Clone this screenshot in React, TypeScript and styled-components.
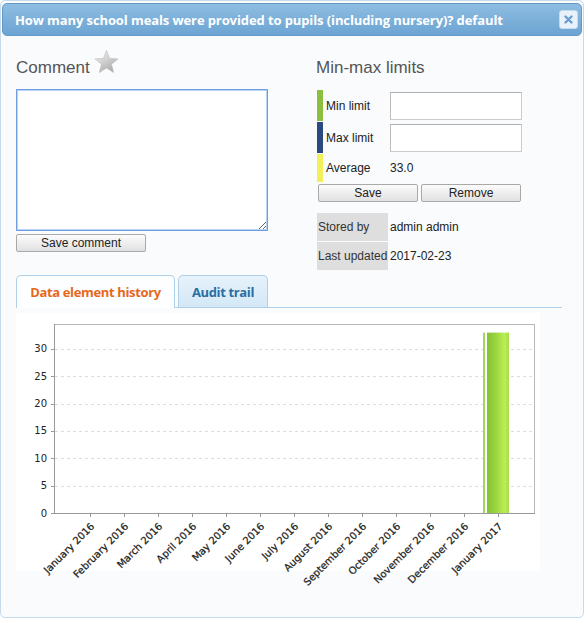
import React from "react";
import styled, { createGlobalStyle } from "styled-components";

const Global = createGlobalStyle`
  html, body { margin: 0; padding: 0; background: #ffffff; }
  body { font-family: "Liberation Sans", Arial, sans-serif; }
  * { box-sizing: border-box; }
`;

const Dialog = styled.div`
  width: 584px;
  height: 618px;
  border: 1px solid #c5dbec;
  border-radius: 5px;
  padding: 2px 1px;
  background: #f9fbfd;
  display: flex;
  flex-direction: column;
`;

const TitleBar = styled.div`
  height: 33px;
  flex: none;
  border: 1px solid #6399c9;
  border-radius: 5px;
  background: linear-gradient(#8ebde1, #6ca4d2);
  display: flex;
  align-items: center;
  justify-content: space-between;
  padding: 0 3px 0 12px;
`;

const Title = styled.span`
  color: #ffffff;
  font-family: "Open Sans", "Liberation Sans", sans-serif;
  font-weight: 700;
  font-size: 13px;
  letter-spacing: -0.1px;
`;

const CloseButton = styled.button`
  width: 19px;
  height: 19px;
  padding: 0;
  border: 1px solid #c5dbec;
  border-radius: 3px;
  background: #e9f2fa;
  display: flex;
  align-items: center;
  justify-content: center;
`;

const Content = styled.div`
  padding: 0 14px;
  display: flex;
  flex-direction: column;
`;

const TopGrid = styled.div`
  display: grid;
  grid-template-columns: 300px 1fr;
  margin-top: 13px;
`;

const Column = styled.div`
  display: flex;
  flex-direction: column;
  align-items: flex-start;
`;

const Heading = styled.h2`
  margin: 0;
  height: 28px;
  display: flex;
  align-items: flex-end;
  gap: 4px;
  font-weight: normal;
  font-size: 17px;
  color: #555555;
  span { line-height: 19px; }
  svg { margin-bottom: 3px; }
`;

const CommentArea = styled.textarea`
  margin-top: 12px;
  width: 252px;
  height: 142px;
  border: 1px solid #6f9fe3;
  box-shadow: 0 0 0 1px #b9d2f4 inset;
  background: #ffffff;
  outline: none;
  resize: both;
  font-family: "Liberation Sans", Arial, sans-serif;
  font-size: 12px;
`;

const Button = styled.button<{ $w: number }>`
  width: ${(p) => p.$w}px;
  height: 18px;
  padding: 0;
  border: 1px solid #a9a9a9;
  border-radius: 2px;
  background: linear-gradient(#fcfcfc, #e1e1e1);
  font-family: "Liberation Sans", Arial, sans-serif;
  font-size: 12px;
  color: #222222;
`;

const SaveCommentButton = styled(Button)`
  margin-top: 3px;
`;

const LimitTable = styled.div`
  margin-top: 13px;
  margin-left: 1px;
  display: flex;
  flex-direction: column;
  gap: 1px;
`;

const LimitRow = styled.div<{ $h: number }>`
  display: grid;
  grid-template-columns: 6px 67px 132px;
  align-items: center;
  height: ${(p) => p.$h}px;
  font-size: 12px;
  color: #222222;
`;

const ColorBar = styled.div<{ $c: string }>`
  align-self: stretch;
  background: ${(p) => p.$c};
`;

const LimitLabel = styled.span`
  padding-left: 3px;
`;

const LimitInput = styled.input`
  width: 132px;
  height: 28px;
  border: 1px solid #cccccc;
  border-top-color: #b0b0b0;
  border-left-color: #bcbcbc;
  background: #ffffff;
`;

const ButtonRow = styled.div`
  display: flex;
  gap: 3px;
  margin-top: 2px;
  margin-left: 2px;
`;

const InfoTable = styled.div`
  margin-top: 11px;
  margin-left: 1px;
  display: grid;
  grid-template-columns: 71px auto;
  grid-auto-rows: 28px;
  row-gap: 1px;
  column-gap: 2px;
  font-size: 12px;
  color: #222222;
`;

const InfoLabel = styled.div`
  background: #dedede;
  display: flex;
  align-items: center;
  padding-left: 1px;
  color: #333333;
`;

const InfoValue = styled.div`
  display: flex;
  align-items: center;
`;

const TabList = styled.div`
  margin-top: 5px;
  margin-right: 6px;
  display: flex;
  gap: 3px;
  align-items: flex-start;
  border-bottom: 1px solid #aed0ea;
`;

const Tab = styled.div<{ $active?: boolean; $w: number }>`
  width: ${(p) => p.$w}px;
  height: ${(p) => (p.$active ? 33 : 32)}px;
  margin-bottom: ${(p) => (p.$active ? -1 : 0)}px;
  border: 1px solid #aed0ea;
  border-bottom: none;
  border-radius: 5px 5px 0 0;
  background: ${(p) => (p.$active ? "#fdfeff" : "linear-gradient(#e6f2fb, #d4e8f7)")};
  color: ${(p) => (p.$active ? "#e5691c" : "#2b6ea3")};
  font-family: "Open Sans", "Liberation Sans", sans-serif;
  font-weight: 700;
  font-size: 13px;
  letter-spacing: -0.35px;
  display: flex;
  align-items: center;
  justify-content: center;
`;

const Panel = styled.div`
  padding-top: 5px;
`;

const ChartBox = styled.div`
  width: 524px;
  height: 258px;
  background: #ffffff;
  svg { overflow: visible; display: block; }
`;

const Star = () => (
  <svg width="25" height="24" viewBox="0 0 25 24">
    <defs>
      <linearGradient id="starG" x1="0" y1="0" x2="0.6" y2="1">
        <stop offset="0" stopColor="#f6f6f6" />
        <stop offset="0.5" stopColor="#d2d2d2" />
        <stop offset="1" stopColor="#acacac" />
      </linearGradient>
    </defs>
    <polygon
      points="12.5,0.5 15.6,8.4 24,8.9 17.5,14.2 19.7,22.6 12.5,18 5.3,22.6 7.5,14.2 1,8.9 9.4,8.4"
      fill="url(#starG)"
      stroke="#bbbbbb"
      strokeWidth="0.6"
      strokeLinejoin="round"
    />
  </svg>
);

const CloseIcon = () => (
  <svg width="9" height="9" viewBox="0 0 9 9">
    <path d="M1.5 1.5 L7.5 7.5 M7.5 1.5 L1.5 7.5" stroke="#6a9dcf" strokeWidth="2.4" strokeLinecap="round" />
  </svg>
);

const months = [
  "January 2016",
  "February 2016",
  "March 2016",
  "April 2016",
  "May 2016",
  "June 2016",
  "July 2016",
  "August 2016",
  "September 2016",
  "October 2016",
  "November 2016",
  "December 2016",
  "January 2017",
];

const yOf = (v: number) => 200 - v * 5.467;

const Chart = () => (
  <svg width="524" height="258" viewBox="0 0 524 258">
    <defs>
      <linearGradient id="barG" x1="0" y1="0" x2="1" y2="0">
        <stop offset="0" stopColor="#84c236" />
        <stop offset="0.35" stopColor="#96d23c" />
        <stop offset="0.8" stopColor="#baee55" />
        <stop offset="1" stopColor="#a6de49" />
      </linearGradient>
    </defs>
    {[5, 10, 15, 20, 25, 30].map((v) => (
      <line
        key={v}
        x1="39"
        x2="518"
        y1={Math.round(yOf(v)) + 0.5}
        y2={Math.round(yOf(v)) + 0.5}
        stroke="#dddddd"
        strokeDasharray="3,3"
      />
    ))}
    <rect x="38.5" y="11.5" width="480" height="189" fill="none" stroke="#b8b8b8" />
    <line x1="38.5" x2="38.5" y1="11" y2="201" stroke="#999999" />
    <line x1="38" x2="519" y1="200.5" y2="200.5" stroke="#999999" />
    {[0, 5, 10, 15, 20, 25, 30].map((v) => (
      <g key={v}>
        <line x1="35" x2="38" y1={Math.round(yOf(v)) + 0.5} y2={Math.round(yOf(v)) + 0.5} stroke="#999999" />
        <text
          x="31"
          y={yOf(v) + 3.5}
          textAnchor="end"
          fontFamily="'DejaVu Sans', sans-serif"
          fontSize="10"
          fill="#222222"
        >
          {v}
        </text>
      </g>
    ))}
    <rect x="467" y="19.6" width="2" height="180.4" fill="#a3d856" />
    <rect x="471" y="19.6" width="22" height="180.4" fill="url(#barG)" />
    {months.map((m, i) => {
      const x = 74 + 34 * i;
      return (
        <g key={m}>
          <line x1={x + 0.5} x2={x + 0.5} y1="200" y2="204" stroke="#999999" />
          <text
            transform={`translate(${x + 5},214) rotate(-45)`}
            textAnchor="end"
            fontFamily="'DejaVu Sans', sans-serif"
            fontSize="10"
            fill="#222222"
            stroke="#222222"
            strokeWidth="0.25"
          >
            {m}
          </text>
        </g>
      );
    })}
  </svg>
);

export default function App() {
  return (
    <>
      <Global />
      <Dialog>
        <TitleBar>
          <Title>How many school meals were provided to pupils (including nursery)? default</Title>
          <CloseButton aria-label="close">
            <CloseIcon />
          </CloseButton>
        </TitleBar>
        <Content>
          <TopGrid>
            <Column>
              <Heading>
                <span>Comment</span>
                <Star />
              </Heading>
              <CommentArea />
              <SaveCommentButton $w={130}>Save comment</SaveCommentButton>
            </Column>
            <Column>
              <Heading>
                <span>Min-max limits</span>
              </Heading>
              <LimitTable>
                <LimitRow $h={31}>
                  <ColorBar $c="#8cbf3f" />
                  <LimitLabel>Min limit</LimitLabel>
                  <LimitInput />
                </LimitRow>
                <LimitRow $h={31}>
                  <ColorBar $c="#2a4a7f" />
                  <LimitLabel>Max limit</LimitLabel>
                  <LimitInput />
                </LimitRow>
                <LimitRow $h={28}>
                  <ColorBar $c="#f2f05a" />
                  <LimitLabel>Average</LimitLabel>
                  <span>33.0</span>
                </LimitRow>
              </LimitTable>
              <ButtonRow>
                <Button $w={100}>Save</Button>
                <Button $w={100}>Remove</Button>
              </ButtonRow>
              <InfoTable>
                <InfoLabel>Stored by</InfoLabel>
                <InfoValue>admin admin</InfoValue>
                <InfoLabel>Last updated</InfoLabel>
                <InfoValue>2017-02-23</InfoValue>
              </InfoTable>
            </Column>
          </TopGrid>
          <TabList>
            <Tab $active $w={159}>Data element history</Tab>
            <Tab $w={90}>Audit trail</Tab>
          </TabList>
          <Panel>
            <ChartBox>
              <Chart />
            </ChartBox>
          </Panel>
        </Content>
      </Dialog>
    </>
  );
}
